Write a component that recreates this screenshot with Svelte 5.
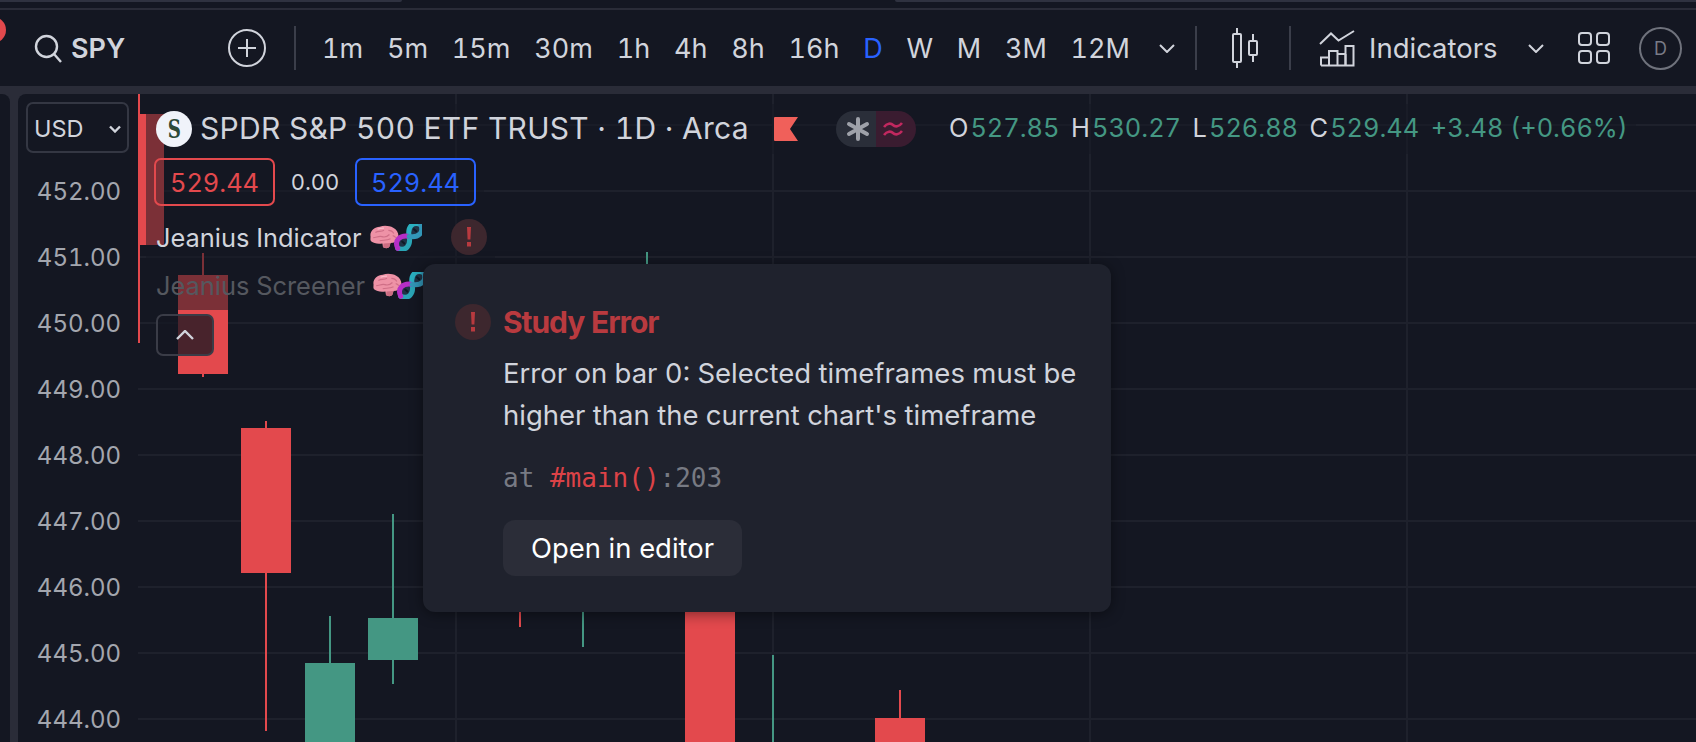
<script>
  const frames = ['1m','5m','15m','30m','1h','4h','8h','16h','D','W','M','3M','12M'];
  const prices = ['452.00','451.00','450.00','449.00','448.00','447.00','446.00','445.00','444.00'];
  const hLines = [124,190,256,322,388,454,520,586,652,718];
  const vLines = [455,772,1089,1406];
  const red = '#e3494d', green = '#449783';
  const rects = [
    [138,94,2,249,red],[140,114,24,131,red],
    [202,253,2,124,red],[178,275,50,99,red],
    [265,421,2,310,red],[241,428,50,145,red],
    [329,616,2,60,green],[305,663,50,90,green],
    [392,514,2,170,green],[368,618,50,42,green],
    [519,560,2,67,red],[582,560,2,87,green],
    [646,252,2,30,green],[685,590,50,160,red],
    [772,655,2,90,green],[899,690,2,30,red],[875,718,50,30,red]
  ];
  const ohlc = [['O','527.85'],['H','530.27'],['L','526.88'],['C','529.44']];
</script>

{#snippet alert()}
  <span class="alert"><svg width="6" height="20" viewBox="0 0 6 20"><path d="M1 0h4l-.6 12.500h-2.800zM1 15h4v4.400H1z" fill="#b83a3f"/></svg></span>
{/snippet}

{#snippet emoji()}
  <svg class="emoji" width="52" height="27" viewBox="0 0 52 27">
    <g transform="scale(1.080 1.050)">
      <path d="M.5 12C-.5 7 4 2.500 9 2.500c4-1.500 9-1 12.500 1 4 2 5.500 6.500 4.500 10-1 3-3.500 4.500-7 4.500l-1 3.500c-1 2-4.500 2-6 .5l-.5-3.500c-4 1-8 0-10.500-2C0 15.500.5 14 .5 12z" fill="#ee92a6"/>
      <path d="M12.500 18.500l-.4 3.500c1.500 1.500 5 1.500 6-.5l.9-3.500z" fill="#cb6d82"/>
      <path d="M5 8c3-2 5 0 8-2M3 13c3 0 5-2 8-1s5 0 7-2M9 16c3-1 6 0 10-2M17 6c2 0 4 1 5 3M21 11c1 0 2 1 3 2" stroke="#cf6f87" stroke-width="1.100" fill="none"/>
      <path d="M7 5c2-1 4-1 6-1" stroke="#f9bcc9" stroke-width="1.200" fill="none"/>
    </g>
    <g transform="translate(27 25) rotate(-46)" fill="none" stroke-width="5" stroke-linecap="round">
      <path d="M1 0C4-8 12-8 17.500 0 23 8 31 8 34 0 31-8 23-8 17.500 0 12 8 4 8 1 0z" fill="#1f3346" stroke="none"/>
      <path d="M1 0C4 8 12 8 17.500 0" stroke="#2aa5b6"/>
      <path d="M17.500 0C23-8 31-8 34 0" stroke="#2ab0c0"/>
      <path d="M1 0C4-8 12-8 17.500 0" stroke="#b52ec6"/>
      <path d="M17.500 0C23 8 31 8 34 0" stroke="#3297b8"/>
      <path d="M9-1.500v3M26-1.500v3" stroke="#0f1a26" stroke-width="2"/>
    </g>
  </svg>
{/snippet}

<div class="page">
  <div class="tabs"><i class="tab one"></i><i class="tab two"></i></div>

  <header>
    <span class="dot"></span>
    <svg class="search" width="28" height="29" viewBox="0 0 28 29" fill="none" stroke="#d1d4dc" stroke-width="2.400"><circle cx="12.500" cy="12.500" r="10.500"/><path d="M20 20l7 8"/></svg>
    <b class="symbol">SPY</b>
    <svg class="plus" width="38" height="38" viewBox="0 0 38 38" fill="none" stroke="#d1d4dc" stroke-width="2"><circle cx="19" cy="19" r="18"/><path d="M10 19h18M19 10v18"/></svg>
    <i class="sep first"></i>
    <div class="frames">
      {#each frames as f}<span class:active={f === 'D'}>{f}</span>{/each}
    </div>
    <svg class="chev c1" width="16" height="9" viewBox="0 0 16 9" fill="none" stroke="#d1d4dc" stroke-width="2"><path d="M1 1l7 7 7-7"/></svg>
    <i class="sep s2"></i>
    <svg class="candles" width="28" height="40" viewBox="0 0 28 40" fill="none" stroke="#d1d4dc" stroke-width="2"><path d="M6 0v6M6 34v6M22 6v7M22 27v7"/><rect x="2" y="6" width="8" height="28" rx="1"/><rect x="18" y="13" width="8" height="14" rx="1"/></svg>
    <i class="sep s3"></i>
    <svg class="ind" width="36" height="38" viewBox="0 0 36 38" fill="none" stroke="#d1d4dc" stroke-width="2"><path d="M1 15l11-10.500 7.500 7L35 2"/><path d="M2 36.500v-8h8m0 8v-14.500h8.500v14.500m0-11.500h8m0 11.500V17H34.500v19.500H2"/><path d="M10 28.500v8M26.500 25v11"/></svg>
    <span class="indlabel">Indicators</span>
    <svg class="chev c2" width="16" height="9" viewBox="0 0 16 9" fill="none" stroke="#d1d4dc" stroke-width="2"><path d="M1 1l7 7 7-7"/></svg>
    <svg class="grid" width="32" height="32" viewBox="0 0 32 32" fill="none" stroke="#d1d4dc" stroke-width="2"><rect x="1" y="1" width="12" height="12" rx="3"/><rect x="19" y="1" width="12" height="12" rx="3"/><rect x="1" y="19" width="12" height="12" rx="3"/><rect x="19" y="19" width="12" height="12" rx="3"/></svg>
    <span class="avatar">D</span>
  </header>

  <main>
    <aside></aside>
    <section class="panel">
      <div class="axis">
        <div class="usd"><span>USD</span><svg width="12" height="8" viewBox="0 0 12 8" fill="none" stroke="#d1d4dc" stroke-width="2.400"><path d="M1 1.500l5 5 5-5"/></svg></div>
        {#each prices as p}<div class="price">{p}</div>{/each}
      </div>
      <div class="chart">
        <svg class="plot" width="1558" height="648" viewBox="138 94 1558 648" shape-rendering="crispEdges">
          {#each hLines as y}<rect x="138" y={y} width="1558" height="2" fill="#1e212c"/>{/each}
          {#each vLines as x}<rect x={x} y="94" width="2" height="648" fill="#1e212c"/>{/each}
          {#each rects as r}<rect x={r[0]} y={r[1]} width={r[2]} height={r[3]} fill={r[4]}/>{/each}
        </svg>

        <div class="legend">
          <div class="row title">
            <span class="logo"><span>S</span></span>
            <span class="name">SPDR S&amp;P 500 ETF TRUST · 1D · Arca</span>
            <svg class="flag" width="24" height="24" viewBox="0 0 24 24"><path d="M1 0h23l-8 12 8 12H1a1 1 0 0 1-1-1V1a1 1 0 0 1 1-1z" fill="#f0605a"/></svg>
            <span class="pill">
              <span class="pl"><svg width="24" height="24" viewBox="0 0 24 24" stroke="#9ea1a9" stroke-width="4" stroke-linecap="round"><path d="M12 2v20M3 7l18 10M21 7L3 17"/></svg></span>
              <span class="pr"><svg width="20" height="18" viewBox="0 0 20 18" fill="none" stroke="#c2285f" stroke-width="2.600"><path d="M1 7c3-4 7-4 9-2s6 2 9-2M1 15c3-4 7-4 9-2s6 2 9-2"/></svg></span>
            </span>
            <span class="ohlc">
              {#each ohlc as [k, v]}<span class="pair"><span class="k">{k}</span><span class="v">{v}</span></span>{/each}
              <span class="v chg">+3.48 (+0.66%)</span>
            </span>
          </div>
          <div class="row quotes">
            <span class="qbox sell">529.44</span>
            <span class="spread">0.00</span>
            <span class="qbox buy">529.44</span>
          </div>
          <div class="row study">
            <span class="sname">Jeanius Indicator</span>
            {@render emoji()}
            {@render alert()}
          </div>
          <div class="row study off">
            <span class="sname">Jeanius Screener</span>
            {@render emoji()}
          </div>
          <button class="collapse" aria-label="Collapse"><svg width="18" height="10" viewBox="0 0 18 10" fill="none" stroke="#d1d4dc" stroke-width="2.400"><path d="M1 9l8-8 8 8"/></svg></button>
        </div>

        <div class="popup">
          <div class="phead">
            {@render alert()}
            <h3>Study Error</h3>
          </div>
          <div class="pbody">
            <p>Error on bar 0: Selected timeframes must be<br>higher than the current chart's timeframe</p>
            <code>at <em>#main()</em>:203</code>
            <button class="open">Open in editor</button>
          </div>
        </div>
      </div>
    </section>
  </main>
</div>

<style>
  :global(body) { margin: 0; background: #2a2c38; }
  .page { width: 1696px; height: 742px; overflow: hidden; display: flex; flex-direction: column; background: #2a2c38; font-family: Inter, "Liberation Sans", sans-serif; font-variant-numeric: tabular-nums; color: #d1d4dc; position: relative; }
  .tabs { height: 8px; flex: none; background: #141722; position: relative; margin-bottom: 2px; }
  .tab { position: absolute; top: 0; height: 2px; background: #2f3240; }
  .tab.one { left: 0; width: 402px; border-radius: 0 0 4px 0; }
  .tab.two { left: 895px; right: 0; border-radius: 0 0 0 4px; }

  header { height: 76px; flex: none; background: #141722; display: flex; align-items: center; padding-left: 34px; position: relative; font-size: 27.500px; }
  .dot { position: absolute; left: -20px; top: 7px; width: 26px; height: 26px; border-radius: 50%; background: #e3494d; }
  .search { flex: none; }
  .symbol { margin-left: 9px; width: 53px; font-size: 27px; font-weight: 600; }
  .plus { margin-left: 104px; flex: none; }
  .sep { width: 2px; height: 44px; background: #3b3e4a; flex: none; }
  .sep.first { margin-left: 28px; }
  .frames { margin-left: 26px; width: 808px; flex: none; display: flex; justify-content: space-between; font-size: 27px; }
  .active { color: #2962ff; }
  .chev { flex: none; }
  .c1 { margin-left: 29px; }
  .s2 { margin-left: 20px; }
  .candles { margin-left: 34px; flex: none; }
  .s3 { margin-left: 30px; }
  .ind { margin-left: 28px; flex: none; }
  .indlabel { margin-left: 14px; width: 126px; flex: none; }
  .c2 { margin-left: 33px; }
  .grid { margin-left: 34px; flex: none; }
  .avatar { margin-left: 29px; width: 39px; height: 39px; border: 2px solid #6f727c; border-radius: 50%; display: flex; align-items: center; justify-content: center; font-size: 18px; color: #787b86; flex: none; }

  main { flex: 1; min-height: 0; margin-top: 8px; display: flex; gap: 8px; }
  aside { width: 10px; background: #141722; border-radius: 0 8px 0 0; flex: none; }
  .panel { flex: 1; display: flex; background: #141722; border-radius: 8px 0 0 0; overflow: hidden; }
  .axis { width: 120px; flex: none; padding: 64px 0 0 2px; position: relative; box-sizing: border-box; }
  .price { height: 66.100px; display: flex; align-items: center; justify-content: center; font-size: 24px; color: #a3a6ae; }
  .usd { position: absolute; left: 8px; top: 8px; width: 103px; height: 51px; box-sizing: border-box; border: 2px solid #343743; border-radius: 7px; display: flex; align-items: center; justify-content: space-between; padding: 2px 6px 0 6px; font-size: 23.500px; color: #d1d4dc; }

  .chart { flex: 1; position: relative; }
  .plot { position: absolute; left: 0; top: 0; display: block; }
  .legend { position: absolute; left: 8px; top: 10px; display: flex; flex-direction: column; align-items: flex-start; }
  .row { display: flex; align-items: center; background: rgba(20,23,34,.5); padding-left: 10px; padding-right: 8px; box-sizing: border-box; }
  .title { height: 50px; font-size: 30px; }
  .logo { width: 36px; height: 36px; border-radius: 50%; background: #f0f3fa; color: #2b4a38; display: flex; align-items: center; justify-content: center; font: 700 26px/1 "DejaVu Serif", serif; flex: none; }
  .logo span { display: block; transform: scaleX(.7); }
  .name { margin: 0 0 3px 8px; white-space: nowrap; letter-spacing: .3px; }
  .flag { margin-left: 25px; flex: none; }
  .pill { margin-left: 38px; display: flex; width: 80px; height: 36px; border-radius: 18px; overflow: hidden; flex: none; }
  .pl { width: 40px; background: #2a2e39; display: flex; align-items: center; justify-content: flex-end; padding-right: 6px; box-sizing: border-box; }
  .pr { width: 40px; background: #3a1c30; display: flex; align-items: center; padding-left: 7px; box-sizing: border-box; }
  .ohlc { margin: 0 0 3px 33px; display: flex; gap: 11.500px; font-size: 25.400px; white-space: nowrap; }
  .pair { display: flex; gap: 2px; }
  .v { color: #449783; }

  .quotes { height: 56px; font-size: 25.400px; padding-left: 8px; }
  .qbox { width: 121px; height: 48px; box-sizing: border-box; border: 2px solid; border-radius: 7px; display: flex; align-items: center; justify-content: center; }
  .sell { color: #e3494d; }
  .buy { color: #2962ff; }
  .spread { width: 80px; text-align: center; font-size: 22px; }
  .study { font-size: 25.400px; height: 54px; }
  .study.off { height: 46px; padding-bottom: 3px; }
  .off .sname { color: #55585f; }
  .emoji { margin-left: 8px; flex: none; }
  .alert { width: 36px; height: 36px; border-radius: 50%; background: #3d272e; display: flex; align-items: center; justify-content: center; flex: none; }
  .study .alert { margin-left: 29px; }
  .collapse { margin: 4px 0 0 10px; width: 58px; height: 42px; padding: 0; box-sizing: border-box; background: rgba(20,23,34,.75); border: 2px solid #3a3c47; border-radius: 7px; display: flex; align-items: center; justify-content: center; }

  .popup { position: absolute; left: 285px; top: 170px; width: 688px; height: 348px; box-sizing: border-box; padding: 40px 32px 36px; background: #1f222d; border-radius: 12px; box-shadow: 0 2px 14px rgba(0,0,0,.45); }
  .phead { display: flex; align-items: center; gap: 12px; height: 36px; }
  h3 { margin: 0; font-size: 30px; font-weight: 700; letter-spacing: -1.100px; color: #b83a3f; }
  .pbody { margin-left: 48px; padding-top: 12px; display: flex; flex-direction: column; align-items: flex-start; }
  p { margin: 0; font-size: 27.500px; line-height: 42px; color: #d1d4dc; white-space: nowrap; }
  code { margin-top: 21px; font: 26px/42px "DejaVu Sans Mono", monospace; color: #777a83; }
  em { font-style: normal; color: #dc4247; }
  .open { margin-top: 21px; height: 56px; width: 239px; border: 0; border-radius: 12px; background: #2b2d38; color: #fff; font: 27.400px Inter, sans-serif; padding: 0; }
</style>
